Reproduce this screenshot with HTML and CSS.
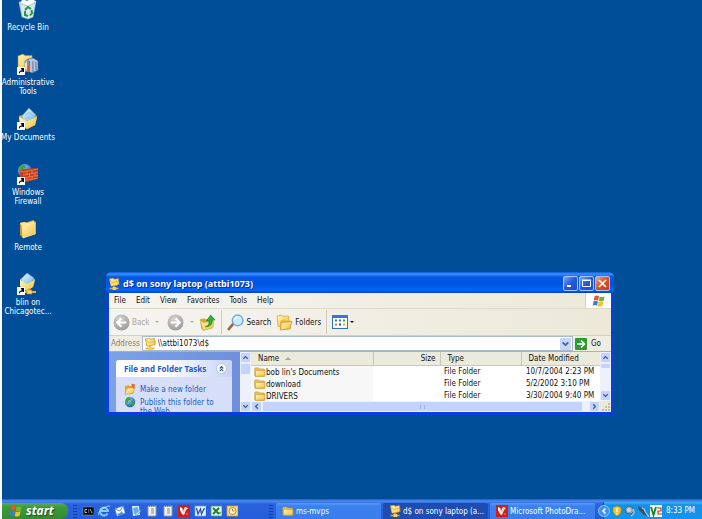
FILE: index.html
```html
<!DOCTYPE html>
<html lang="en">
<head>
<meta charset="utf-8">
<title>Desktop</title>
<link rel="stylesheet" href="styles.css">
</head>
<body>
<svg class="defs" aria-hidden="true">
  <defs>
    <linearGradient id="gold" x1="0" y1="0" x2="1" y2="1"><stop offset="0" stop-color="#fff7b8"/><stop offset="1" stop-color="#eebf45"/></linearGradient>
    <linearGradient id="paper" x1="0" y1="0" x2="1" y2="1"><stop offset="0" stop-color="#eef9ff"/><stop offset="1" stop-color="#6db5ec"/></linearGradient>
    <radialGradient id="globe" cx=".35" cy=".3" r=".8"><stop offset="0" stop-color="#9fd4ff"/><stop offset="1" stop-color="#0d4fb0"/></radialGradient>
    <radialGradient id="grey" cx=".4" cy=".3" r=".7"><stop offset="0" stop-color="#d6d6d2"/><stop offset="1" stop-color="#9c9c98"/></radialGradient>
    <symbol id="folder" viewBox="0 0 16 16">
      <path d="M1 3.5Q1 2.5 2 2.5h4l1.5 1.500H13q1 0 1 1V13q0 .8-1 .8H2q-1 0-1-.8z" fill="#efc250" stroke="#b88d2c" stroke-width=".8"/>
      <path d="M2 6H14.500V13.600H2z" fill="url(#gold)" stroke="#c79a34" stroke-width=".8"/>
    </symbol>
    <symbol id="netfolder" viewBox="0 0 16 16">
      <path d="M2 1l5-1 1 1.500 6-1 1 8-11 2.300z" fill="url(#gold)" stroke="#b98218" stroke-width=".8"/>
      <path d="M2 2l4 4 9-1.500-2.400 5L4 11z" fill="#ffdf70" stroke="#b98218" stroke-width=".5"/>
      <path d="M8 10v4M2 14h12" stroke="#e5a626" stroke-width="2.2"/><path d="M6 12h5v4H6z" fill="#f7ce58"/>
    </symbol>
    <symbol id="shortcut" viewBox="0 0 8 8"><path d="M0 0h8v8H0z" fill="#fff"/><path d="M2 7Q1.500 3.500 4.500 3.500V1.300H7V5H5.600V4.600Q3 4.500 2 7z" fill="#000"/><path d="M3.500 1H7v3.500z"/></symbol>
    <symbol id="flag" viewBox="0 0 16 16">
      <path d="M3 2.500Q5.500.8 8 2.400L7 7.400Q4.500 6 2 7.500z" fill="#e8532a"/><path d="M8.800 2.800Q11.300 4.300 14.500 2.500L13.400 7.600Q10.500 9.200 7.800 7.800z" fill="#75b52d"/>
      <path d="M1.800 8.400Q4.300 6.900 6.800 8.300L5.800 13.300Q3.300 11.900.8 13.400z" fill="#3c7ddb"/><path d="M7.600 8.700Q10.200 10.100 13.200 8.400L12.100 13.500Q9.300 15.200 6.600 13.700z" fill="#f6c02c"/>
    </symbol>
    <symbol id="earth" viewBox="0 0 16 16"><circle cx="8" cy="8" r="7" fill="url(#globe)"/><path d="M3 3q3-2 5-1l1 3-3 1-1 3-3-1zM10 6l4 1q1 3-2 6l-2-1-1-3zM4 10l3 2-1 2q-2-1-3-3z" fill="#3aa63c"/></symbol>
    <symbol id="doc" viewBox="0 0 12 12"><path d="M2 1h8v10H2z" fill="#f5f3e9" stroke="#8b98ac"/><path d="M5 4h3M5 6h3M5 8h3" stroke="#5b6b80" stroke-width=".8"/><path d="M3 1h6" stroke="#445" stroke-dasharray="1 1"/></symbol>
    <symbol id="photodraw" viewBox="0 0 12 12"><path d="M0 0h12v12H0z" fill="#cf2018"/><path d="M2 2l2 1 1 3 2-4 3 1-2 2-2 5-2-1-2-4z" fill="#fff"/><path d="M4 3l2 5M8 3L6 7M8 9h2" stroke="#f0a9a0" stroke-width=".8"/></symbol>
  </defs>
</svg>

<main class="desktop">
  <nav class="shortcuts" aria-label="Desktop icons">
    <a class="shortcut" href="#">
      <svg viewBox="0 0 22 22"><path d="M2 4l17-1-3 16-5 2-6-2z" fill="#d9eaf6" stroke="#8fb4d2" stroke-width=".7"/><path d="M3 5l3-4 4 2 5-3 4 4-8 4z" fill="#fff" stroke="#b7cbdc" stroke-width=".6"/><path d="M3 6l8 2 7-3" stroke="#a5c1d6" fill="none" stroke-width=".7"/><path d="M8 12l3-3 3 2M14.500 12l.5 3-2 2.500M11 18l-3-1V13" fill="none" stroke="#229b35" stroke-width="2"/></svg>
      <span>Recycle Bin</span>
    </a>
    <a class="shortcut" href="#">
      <svg viewBox="0 0 22 22"><path d="M1 3l5-2 2 1.500h7V15H1z" fill="url(#gold)" stroke="#b48d2b" stroke-width=".6"/><path d="M8 8l3-2v12l-3 1zM11 6l5-1 5 3v9l-6 3-4-2z" fill="#b8c6dc" stroke="#536f9b" stroke-width=".7"/><path d="M12.500 8v9M16 8v11M19 9v8" stroke="#586fa0"/><path d="M10 13h3v6h-3z" fill="#ed5a24"/><path d="M8 10h2v6H8z" fill="#f4dfc0"/><use href="#shortcut" x="0" y="14" width="8" height="8"/></svg>
      <span>Administrative<br>Tools</span>
    </a>
    <a class="shortcut" href="#">
      <svg viewBox="0 0 22 22"><path d="M2 8l7-2 11 2-2 9-8 4-7-5z" fill="#e9bb47" stroke="#a37b27" stroke-width=".5"/><path d="M5 8l7-8 7 7-5 7-8-2z" fill="url(#paper)" stroke="#669bc6" stroke-width=".6"/><path d="M8 8l4-4 4 4M8 10h7" stroke="#8cc4ee" fill="none"/><path d="M2 9l8 4 10-4-2 8-8 4-7-5z" fill="url(#gold)"/><use href="#shortcut" x="0" y="14" width="8" height="8"/></svg>
      <span>My Documents</span>
    </a>
    <a class="shortcut" href="#">
      <svg viewBox="0 0 22 22"><use href="#earth" x="0" y="0" width="16" height="16"/><path d="M3 8l3-2 15-1v11L5 20l-2-2z" fill="#c93e1e"/><path d="M3 8l3 1 15-3M6 12l15-2.500M6 15l15-2.500M6 18l15-3M10 9v2.500M15 8v2M12.500 11v3M18 10v3M10 14.500v3M15 13.500v3" stroke="#f29a68" fill="none" stroke-width=".6"/><use href="#shortcut" x="0" y="14" width="8" height="8"/></svg>
      <span>Windows<br>Firewall</span>
    </a>
    <a class="shortcut" href="#">
      <svg viewBox="0 0 22 22"><path d="M3 5l3-1 2 1 8-3 3 2v12L6 20l-3-3z" fill="#cf9a30"/><path d="M3 5l5-1 2 1 7-2v3L5 8z" fill="#ffe692"/><path d="M5 8l13-3v11L6 20z" fill="url(#gold)" stroke="#ffeaa0" stroke-width=".6"/></svg>
      <span>Remote</span>
    </a>
    <a class="shortcut" href="#">
      <svg viewBox="0 0 22 22"><path d="M3 6l6-1 9 1-2 8-7 4-6-5z" fill="#e4b23b"/><path d="M4 6l6-6 7 5-4 7-7-1z" fill="url(#paper)" stroke="#5f9fd0" stroke-width=".6"/><path d="M3 7l7 4 8-4-2 7-6 4-7-5z" fill="url(#gold)"/><path d="M12 15v4M8 19h11" stroke="#efb532" stroke-width="2"/><path d="M10 17h5v4h-5z" fill="#f6d56d" stroke="#b37f1a" stroke-width=".5"/><use href="#shortcut" x="0" y="14" width="8" height="8"/></svg>
      <span>blin on<br>Chicagotec...</span>
    </a>
  </nav>

  <section class="window" aria-label="d$ on sony laptop">
    <header class="titlebar">
      <svg class="ico12"><use href="#netfolder"/></svg>
      <h1>d$ on sony laptop (attbi1073)</h1>
      <button class="winbtn" aria-label="Minimize"><svg viewBox="0 0 13 13"><path d="M3 9h4" stroke="#fff" stroke-width="2"/></svg></button>
      <button class="winbtn" aria-label="Maximize"><svg viewBox="0 0 13 13"><path d="M2.500 3.500h8v6h-8zM2 3h9" stroke="#fff" fill="none"/></svg></button>
      <button class="winbtn close" aria-label="Close"><svg viewBox="0 0 13 13"><path d="M3 3l7 7M10 3l-7 7" stroke="#fff" stroke-width="1.600"/></svg></button>
    </header>
    <div class="menubar">
      <button>File</button><button>Edit</button><button>View</button><button>Favorites</button><button>Tools</button><button>Help</button>
      <span class="brand"><svg class="ico14"><use href="#flag"/></svg></span>
    </div>
    <div class="toolbar">
      <button class="tool off"><svg class="ico16" viewBox="0 0 16 16"><circle cx="8" cy="8" r="7.500" fill="url(#grey)"/><path d="M12.500 8H4.500M8 4L4 8l4 4" stroke="#fff" stroke-width="2" fill="none"/></svg>Back<i class="caret"></i></button>
      <button class="tool off fwd" aria-label="Forward"><svg class="ico16" viewBox="0 0 16 16"><circle cx="8" cy="8" r="7.500" fill="url(#grey)"/><path d="M3.500 8h8M8 4l4 4-4 4" stroke="#fff" stroke-width="2" fill="none"/></svg><i class="caret"></i></button>
      <button class="tool" aria-label="Up"><svg class="ico16" viewBox="0 0 16 16"><path d="M1 5l4-1 1 1 7-1v9l-9 2.500-2-2z" fill="#dfa930"/><path d="M1 6l3 2 10-2-1 7-9 2.500z" fill="url(#gold)" stroke="#c79a31" stroke-width=".5"/><path d="M6 12q4-1 3.500-5.500H7L11 1l4 4.500h-2.500Q13 12 6 12z" fill="#35ae35" stroke="#168020" stroke-width=".6"/></svg></button>
      <span class="divider"></span>
      <button class="tool"><svg class="ico16" viewBox="0 0 16 16"><path d="M1 15l5-6" stroke="#9c6549" stroke-width="2.400"/><circle cx="10" cy="6" r="5" fill="#cdeaff" stroke="#72a6df" stroke-width="1.300"/><path d="M7 5q1-2 3-2" stroke="#fff" fill="none"/></svg>Search</button>
      <button class="tool"><svg class="ico16" viewBox="0 0 16 16"><path d="M1 2l4-1 1 1h6v8l-10 2z" fill="url(#gold)" stroke="#d6a12e" stroke-width=".7"/><path d="M4 6l4-1 1 1h5v8l-10 1z" fill="#efb83f"/><path d="M5 8l10-1-2 7-9 1z" fill="url(#gold)" stroke="#c88e22" stroke-width=".7"/></svg>Folders</button>
      <span class="divider"></span>
      <button class="tool" aria-label="Views"><svg class="views" viewBox="0 0 16 14"><rect x=".5" y=".5" width="15" height="13" fill="#fff" stroke="#2f70d1"/><path d="M0 1.500h16" stroke="#3277dc" stroke-width="3"/><path d="M3 5.500h2M7 5.500h2" stroke="#3676cd" stroke-width="2"/><path d="M11 5.500h2" stroke="#2aa738" stroke-width="2"/><path d="M3 9.500h2" stroke="#e06d33" stroke-width="2"/><path d="M7 9.500h2" stroke="#2754a9" stroke-width="2"/><path d="M11 9.500h2" stroke="#e4aa2b" stroke-width="2"/></svg><i class="caret near"></i></button>
    </div>
    <form class="addressbar">
      <label for="address">Address</label>
      <div class="field">
        <svg class="ico12"><use href="#netfolder"/></svg>
        <input id="address" type="text" value="\\attbi1073\d$">
        <button class="arrow" type="button" aria-label="Show addresses"><svg viewBox="0 0 8 8"><path d="M1.500 2.500L4 5l2.500-2.500" /></svg></button>
      </div>
      <button class="go" type="button"><svg class="ico12" viewBox="0 0 12 12"><rect width="12" height="12" rx="1" fill="#2c9a31"/><path d="M2 6h7M6 2.500L9.500 6 6 9.500" stroke="#fff" stroke-width="1.600" fill="none"/></svg>Go</button>
    </form>
    <div class="content">
      <aside class="tasks">
        <section class="panel">
          <h2>File and Folder Tasks<button aria-label="Collapse"><svg viewBox="0 0 8 8"><path d="M2 4l2-2 2 2M2 7l2-2 2 2"/></svg></button></h2>
          <ul>
            <li><svg class="ico12" viewBox="0 0 16 16"><path d="M1 4l5-1 1 1 6-1v10l-11 2z" fill="#e1a632"/><path d="M1 15L4 7l11-1-3 8z" fill="url(#gold)" stroke="#b9892c" stroke-width=".6"/><path d="M10 1l5 1-2 6-2-2z" fill="#e96530"/></svg><a href="#">Make a new folder</a></li>
            <li><svg class="ico12"><use href="#earth"/></svg><a href="#">Publish this folder to<br>the Web</a></li>
          </ul>
        </section>
      </aside>
      <div class="vscroll" aria-hidden="true"><span class="sbtn"><svg viewBox="0 0 8 8"><path d="M1.500 5.500L4 3l2.500 2.500"/></svg></span><span class="thumb"></span><span class="sbtn end"><svg viewBox="0 0 8 8"><path d="M1.500 2.500L4 5l2.500-2.500"/></svg></span></div>
      <div class="listing">
        <div class="rows">
          <table>
            <colgroup><col class="c-name"><col class="c-size"><col class="c-type"><col></colgroup>
            <thead><tr><th>Name<i class="sort"></i></th><th class="num">Size</th><th>Type</th><th>Date Modified</th></tr></thead>
            <tbody>
              <tr><td><svg class="ico12"><use href="#folder"/></svg>bob lin's Documents</td><td></td><td>File Folder</td><td>10/7/2004 2:23 PM</td></tr>
              <tr><td><svg class="ico12"><use href="#folder"/></svg>download</td><td></td><td>File Folder</td><td>5/2/2002 3:10 PM</td></tr>
              <tr><td><svg class="ico12"><use href="#folder"/></svg>DRIVERS</td><td></td><td>File Folder</td><td>3/30/2004 9:40 PM</td></tr>
            </tbody>
          </table>
          <div class="vscroll" aria-hidden="true"><span class="sbtn"><svg viewBox="0 0 8 8"><path d="M1.500 5.500L4 3l2.500 2.500"/></svg></span><span class="thumb short"></span><span class="sbtn end"><svg viewBox="0 0 8 8"><path d="M1.500 2.500L4 5l2.500-2.500"/></svg></span></div>
        </div>
        <div class="hscroll" aria-hidden="true"><span class="sbtn"><svg viewBox="0 0 8 8"><path d="M5.500 1.500L3 4l2.500 2.500"/></svg></span><span class="thumb"><i></i></span><span class="sbtn"><svg viewBox="0 0 8 8"><path d="M2.500 1.500L5 4 2.500 6.500"/></svg></span><svg class="grip" viewBox="0 0 11 11"><path d="M8 2h2v2H8zM8 5h2v2H8zM8 8h2v2H8zM5 5h2v2H5zM5 8h2v2H5zM2 8h2v2H2z" fill="#c3bfad"/></svg></div>
      </div>
    </div>
  </section>
</main>

<footer class="taskbar">
  <button class="start"><svg class="ico14"><use href="#flag"/></svg>start</button>
  <div class="quick">
    <i class="handle"></i>
    <button aria-label="Command prompt"><svg viewBox="0 0 12 12"><path d="M1 2h11v8H1z" fill="#05070b" stroke="#8a98a6" stroke-width=".5"/><path d="M5 4.500H3v3h2M6.500 4.500v1M6.500 6.500v1M8 4l2 4" stroke="#ddd" fill="none" stroke-width=".8"/></svg></button>
    <button aria-label="Internet Explorer"><svg viewBox="0 0 12 12"><path d="M9.500 8.500A4 4 0 1 1 10 6H3" fill="none" stroke="#7fc8ff" stroke-width="2"/><path d="M1 10Q-1 7 6 3T11 2" fill="none" stroke="#d0ecff" stroke-width=".8"/></svg></button>
    <button aria-label="Outlook Express"><svg viewBox="0 0 12 12"><path d="M1 4l8-3 2 7-8 3z" fill="#fff" stroke="#7ba9dd" stroke-width=".6"/><path d="M1 4l5 2 3-5" fill="none" stroke="#5c90cc"/><path d="M3 9q3 0 5-3l1 3-4 2z" fill="#3f97e6"/></svg></button>
    <button aria-label="Show desktop"><svg viewBox="0 0 12 12"><path d="M2 1h7l1 9-7 1z" fill="#d8eeff"/><path d="M3 3l5-1 1 6-5 1z" fill="#61aeea"/><path d="M5 9l5-4 1 1-5 5z" fill="#b9dcf7" stroke="#37699c" stroke-width=".4"/></svg></button>
    <button aria-label="Notepad"><svg><use href="#doc"/></svg></button>
    <button aria-label="Notepad"><svg><use href="#doc"/></svg></button>
    <button aria-label="PhotoDraw"><svg><use href="#photodraw"/></svg></button>
    <button aria-label="Word"><svg viewBox="0 0 12 12"><path d="M1 1h11v10H1z" fill="#e7f0ff" stroke="#789ddd" stroke-width=".7"/><path d="M2.500 3l1.500 6 2.500-5 1 5L10.500 3" fill="none" stroke="#2454b0" stroke-width="1.300"/></svg></button>
    <button aria-label="Excel"><svg viewBox="0 0 12 12"><path d="M1 1h11v10H1z" fill="#e9f7e6" stroke="#51975b" stroke-width=".8"/><path d="M3 3l6 6M9 3L3 9" stroke="#168035" stroke-width="2"/><path d="M8 8h3" stroke="#168035"/></svg></button>
    <button aria-label="Outlook"><svg viewBox="0 0 12 12"><path d="M1 1h11v10H1z" fill="#ffdd83" stroke="#d69b26" stroke-width=".8"/><circle cx="6.500" cy="6" r="3.500" fill="#fff6d5" stroke="#d28b13"/><path d="M6.500 4v2h2" stroke="#a5680c" fill="none" stroke-width=".8"/></svg></button>
  </div>
  <div class="apps">
    <i class="handle"></i>
    <button class="task"><svg class="ico12"><use href="#folder"/></svg><span>ms-mvps</span></button>
    <button class="task active"><svg class="ico12"><use href="#netfolder"/></svg><span>d$ on sony laptop (a...</span></button>
    <button class="task"><svg class="ico12"><use href="#photodraw"/></svg><span>Microsoft PhotoDra...</span></button>
  </div>
  <div class="tray">
    <button class="expand" aria-label="Show hidden icons"><svg viewBox="0 0 12 12"><circle cx="6" cy="6" r="5.500" fill="#3d92ef" stroke="#a6d4ff" stroke-width=".8"/><path d="M7.500 3.500L5 6l2.500 2.500" fill="none" stroke="#fff" stroke-width="1.600"/></svg></button>
    <svg viewBox="0 0 12 12"><path d="M6 1l4 1.500q1 6-4 8.500Q1 8.500 2 2.500z" fill="#f7c32d" stroke="#a97c15" stroke-width=".7"/><path d="M6 3v4M6 8v1.500" stroke="#fff" stroke-width="1.400"/></svg>
    <svg viewBox="0 0 12 12"><path d="M1 4l3-3 4 1 2 4-3 3-5-1z" fill="#91a5b8" stroke="#3c5268" stroke-width=".7"/><circle cx="5" cy="5" r="2" fill="#cfd8df"/><path d="M9 4q3 4-2 7" stroke="#d8e6f5" fill="none"/></svg>
    <svg viewBox="0 0 12 12"><path d="M1 1l5 3 4 7-3-1-5-5z" fill="#424c57"/><path d="M5 3l2 1 2 4M9 8l3 4" stroke="#b9c5d0" fill="none" stroke-width="1.200"/></svg>
    <svg viewBox="0 0 12 12"><path d="M0 0h12v12H0z" fill="#f4f9ed"/><path d="M1 2l2.500 8L6 2" fill="none" stroke="#118331" stroke-width="1.800"/><path d="M7 3h4v3H8v3h4" fill="none" stroke="#cf3626" stroke-width="1.200"/></svg>
    <time>8:33 PM</time>
  </div>
</footer>
</body>
</html>
```
FILE: styles.css
```css
* { box-sizing: border-box; }

body {
  margin: 0;
  height: 100vh;
  display: flex;
  flex-direction: column;
  overflow: hidden;
  border-left: 2px solid #fafcff;
  background: #004e98;
  font: 8px/9px "DejaVu Sans Condensed", "DejaVu Sans", "Liberation Sans", sans-serif;
  color: #111;
}

button, input {
  margin: 0;
  padding: 0;
  border: 0;
  background: none;
  font: inherit;
  color: inherit;
}

a { color: inherit; text-decoration: none; }
svg { display: block; flex: none; }
.defs { position: absolute; width: 0; height: 0; }
.ico12 { width: 12px; height: 12px; }
.ico14 { width: 14px; height: 14px; }
.ico16 { width: 17px; height: 17px; }

/* Desktop */
.desktop { flex: 1; min-height: 0; position: relative; overflow: hidden; }

.shortcuts {
  display: grid;
  grid-auto-rows: 55px;
  grid-template-columns: 52px;
  width: 52px;
  margin-top: -2px;
}

.shortcut {
  display: flex;
  flex-direction: column;
  align-items: center;
  gap: 3px;
  color: #fff;
  text-align: center;
  white-space: nowrap;
}
.shortcut svg { width: 22px; height: 22px; }

/* Explorer window */
.window {
  position: absolute;
  left: 104px;
  top: 272px;
  width: 508px;
  height: 143px;
  display: flex;
  flex-direction: column;
  padding: 0 3px 3px;
  border-radius: 5px 5px 0 0;
  background: #0a3fdc;
  overflow: hidden;
}

.titlebar {
  flex: none;
  display: flex;
  align-items: center;
  gap: 1px;
  height: 21px;
  margin: 0 -3px;
  padding: 2px 4px 0 2px;
  background: linear-gradient(#0b58d6, #3b93ff 2px, #0757e5 5px, #0053e1 12px, #0266fb 18px, #0043c8);
}
.titlebar h1 {
  flex: 1;
  margin: 0 0 0 2px;
  font: bold 9px/12px "Noto Sans", sans-serif;
  color: #fff;
  text-shadow: 1px 1px #0b2f8d;
}
.winbtn {
  width: 15px;
  height: 15px;
  border: 1px solid #a9c5fb;
  border-radius: 2px;
  background: linear-gradient(135deg, #7da5f6, #2259dd 50%, #1c4fd0);
}
.winbtn svg { width: 13px; height: 13px; }
.winbtn.close { background: linear-gradient(135deg, #f2a184, #e04f25 50%, #c93a13); }

.menubar {
  flex: none;
  display: flex;
  align-items: stretch;
  gap: 10px;
  height: 16px;
  padding-left: 5px;
  background: linear-gradient(90deg, #f5f4f1, #ece9d8);
  border-bottom: 1px solid #dedbcb;
}
.brand {
  display: flex;
  justify-content: center;
  align-items: center;
  width: 26px;
  margin-left: auto;
  background: #fff;
  border-left: 1px solid #d5d2c2;
}

.toolbar {
  flex: none;
  display: flex;
  align-items: center;
  gap: 5px;
  height: 27px;
  padding-left: 4px;
  background: linear-gradient(90deg, #f5f4f1, #ece9d8);
  border-bottom: 1px solid #c9d2d8;
}
.tool { display: flex; align-items: center; gap: 2px; }
.tool.off { color: #aaa9a0; }
.tool.fwd { margin-left: 3px; }
.views { width: 16px; height: 14px; }
.caret {
  margin-left: 4px;
  border: 2px solid transparent;
  border-top-color: currentColor;
  border-bottom: 0;
}
.caret.near { margin-left: 0; }
.divider { width: 1px; height: 24px; background: #cfccba; }

.addressbar {
  flex: none;
  display: flex;
  align-items: center;
  gap: 2px;
  height: 15px;
  padding: 0 10px 0 2px;
  background: #efede2;
}
.addressbar label { color: #85837a; }
.field {
  flex: 1;
  display: flex;
  align-items: center;
  height: 15px;
  padding: 0 1px;
  background: #fff;
  border: 1px solid #a9bacb;
}
.field input { flex: 1; min-width: 0; height: 11px; padding-left: 2px; outline: 0; }
.arrow {
  width: 11px;
  height: 12px;
  padding: 1px;
  background: #c5d5fc;
  border-radius: 1px;
}
.arrow svg, .sbtn svg, .panel button svg { width: 100%; height: 100%; fill: none; stroke: #42608f; stroke-width: 1.5; }
.go { display: flex; align-items: center; gap: 4px; }

.content { flex: 1; min-height: 0; display: flex; background: #fff; border-top: 1px solid #97b1df; }

/* Task pane */
.tasks {
  flex: none;
  width: 131px;
  padding: 8px 8px 0 7px;
  overflow: hidden;
  background: linear-gradient(90deg, #7ba2e7, #6f8fdb);
}
.panel { background: #d6dff7; border-radius: 3px 3px 0 0; }
.panel h2 {
  display: flex;
  align-items: center;
  justify-content: space-between;
  height: 17px;
  margin: 0;
  padding: 0 5px 0 8px;
  border-radius: 3px 3px 0 0;
  background: linear-gradient(90deg, #fff 40%, #c6d3f7);
  font: bold 8px/9px "Noto Sans", sans-serif;
  color: #215dc6;
}
.panel button {
  width: 11px;
  height: 11px;
  padding: 1px;
  border: 1px solid #b4c2e4;
  border-radius: 50%;
  background: #fff;
}
.panel ul { margin: 0; padding: 6px 4px 0 8px; list-style: none; color: #215dc6; }
.panel li { display: flex; align-items: flex-start; gap: 4px; margin-bottom: 1px; }
.panel li a { padding-top: 2px; }

/* Scroll bars */
.vscroll { flex: none; display: flex; flex-direction: column; width: 11px; background: #eef0fa; }
.sbtn {
  flex: none;
  width: 11px;
  height: 11px;
  padding: 1px;
  border: 1px solid #eaf0ff;
  border-radius: 2px;
  background: #c3d3fd;
}
.sbtn.end { margin-top: auto; }
.thumb { height: 12px; border: 1px solid #eaf0ff; border-radius: 2px; background: #c3d3fd; }
.thumb.short { height: 6px; }
.hscroll { flex: none; display: flex; height: 11px; background: #eef0fa; }
.hscroll .thumb { flex: 1; display: flex; height: 11px; margin-right: 6px; align-items: center; justify-content: center; }
.hscroll .thumb i { width: 5px; height: 4px; border: solid #9fb6ee; border-width: 0 1px; }
.grip { width: 11px; height: 11px; background: #ece9d8; }

/* File list */
.listing { flex: 1; min-width: 0; display: flex; flex-direction: column; }
.rows { flex: 1; min-height: 0; display: flex; align-items: stretch; overflow: hidden; }
.rows table { flex: 1; align-self: flex-start; table-layout: fixed; width: 100%; border-collapse: collapse; }
.c-name { width: 122px; }
.c-size { width: 67px; }
.c-type { width: 81px; }
th {
  height: 13px;
  padding: 0 4px 0 7px;
  background: #ebeadb;
  border-right: 1px solid #cbc8b6;
  border-bottom: 1px solid #cbc7b8;
  font-weight: normal;
  text-align: left;
}
th:last-child { border-right: 0; }
th.num { text-align: right; }
.sort {
  display: inline-block;
  margin-left: 6px;
  border: 3px solid transparent;
  border-top: 0;
  border-bottom-color: #aca899;
  vertical-align: 1px;
}
td { height: 12px; padding: 0 0 0 4px; white-space: nowrap; }
td:first-child { background: #f7f7f7; padding-left: 3px; }
td:last-child { padding-left: 5px; }
td svg { display: inline-block; vertical-align: middle; }

/* Taskbar */
.taskbar {
  flex: none;
  display: flex;
  height: 20px;
  padding-top: 4px;
  background: linear-gradient(#1f56c8, #4b8df0 2px, #2a63dd 5px, #245ddb);
  color: #fff;
}
.start {
  display: flex;
  align-items: center;
  gap: 3px;
  width: 66px;
  padding-left: 7px;
  border-radius: 0 7px 7px 0;
  background: linear-gradient(#5eac56, #3c9a3a 4px, #348b34);
  font: italic bold 12px/14px "Noto Sans", sans-serif;
  text-shadow: 1px 1px 1px #174f17;
}
.handle {
  width: 4px;
  height: 13px;
  background: repeating-linear-gradient(#173f9c 0 1px, transparent 1px 3px);
}
.quick { display: flex; align-items: center; gap: 4px; padding-left: 5px; }
.quick .handle { margin-right: 1px; }
.quick svg { width: 12px; height: 12px; }
.apps { flex: 1; display: flex; align-items: center; gap: 2px; min-width: 0; margin: 0 8px 0 31px; }
.apps .handle { margin-right: 1px; }
.task {
  flex: 1;
  min-width: 0;
  height: 16px;
  display: flex;
  align-items: center;
  gap: 2px;
  padding-left: 6px;
  border-radius: 2px 2px 0 0;
  background: linear-gradient(#5a9bfa, #3c81f0 3px, #3a7cec);
  white-space: nowrap;
}
.task.active { background: #1e4cb0; }
.tray {
  display: flex;
  align-items: center;
  gap: 1px;
  width: 99px;
  margin-top: -1px;
  border-left: 1px solid #0d4fa8;
  background: linear-gradient(#46b5f6, #1290e9 3px, #1495ee);
}
.tray svg { width: 12px; height: 12px; }
.expand { margin-left: -6px; }
.tray time { margin-left: 3px; white-space: nowrap; }
```
